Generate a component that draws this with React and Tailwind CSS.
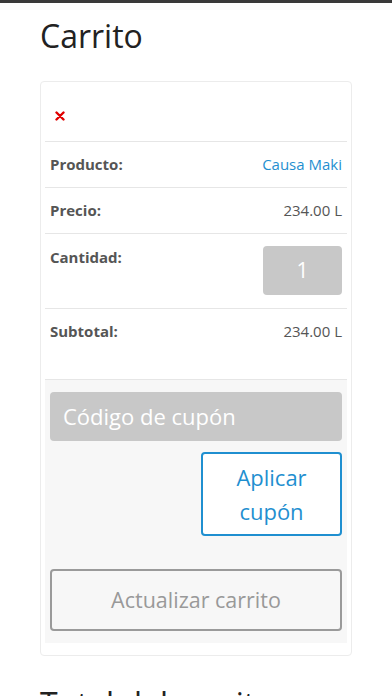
import React from "react";

const font = { fontFamily: '"Open Sans", "Liberation Sans", sans-serif' };

function Row({ label, children, className = "" }) {
  return (
    <div className={`flex justify-between border-t border-[#e6e6e6] px-[5px] ${className}`}>
      <span className="text-[15px] font-bold text-[#555]">{label}</span>
      {children}
    </div>
  );
}

export default function App() {
  return (
    <div className="min-h-[696px] bg-white overflow-hidden" style={font}>
      <div className="h-[3px] bg-[#3a3a3a]" />
      <div className="px-10">
        <h1 className="pt-[13px] text-[32px] leading-[40px] text-[#222]">Carrito</h1>

        <div className="mt-[25px] rounded border border-[#ececec] px-[4px] pt-[4px] pb-[12px]">
          <div className="h-[55px] flex items-center px-[10px]">
            <svg width="10" height="10" viewBox="0 0 10 10" className="mt-[4px]">
              <path d="M1.5 1.5 L8.5 8.5 M8.5 1.5 L1.5 8.5" stroke="#e00000" strokeWidth="2.4" strokeLinecap="round" />
            </svg>
          </div>

          <Row label="Producto:" className="h-[46px] items-center">
            <span className="text-[15px] text-[#1f8fd0]">Causa Maki</span>
          </Row>
          <Row label="Precio:" className="h-[46px] items-center">
            <span className="text-[15px] text-[#555]">234.00 L</span>
          </Row>
          <Row label="Cantidad:" className="h-[75px] items-start pt-[12px]">
            <div className="w-[79px] h-[49px] rounded bg-[#c8c8c8] flex items-center justify-center text-white text-[21px]">
              1
            </div>
          </Row>
          <Row label="Subtotal:" className="h-[71px] items-start pt-[11px]">
            <span className="text-[15px] text-[#555]">234.00 L</span>
          </Row>

          <div className="border-t border-[#e6e6e6] bg-[#f7f7f7] px-[5px] pt-[12px] pb-[12px]">
            <div className="h-[49px] rounded bg-[#c8c8c8] flex items-center px-[13px] text-[22px] text-white">
              Código de cupón
            </div>
            <div className="flex justify-end mt-[11px]">
              <button className="w-[141px] h-[84px] rounded border-2 border-[#1f8fd0] bg-white text-[#1f8fd0] text-[22px] leading-[34px]">
                Aplicar
                <br />
                cupón
              </button>
            </div>
            <button className="mt-[33px] w-full h-[62px] rounded border-2 border-[#9a9a9a] bg-[#f7f7f7] text-[#999] text-[21.5px]">
              Actualizar carrito
            </button>
          </div>
        </div>

        <h2 className="mt-[28px] text-[32px] leading-[40px] text-[#222]">Total del carrito</h2>
      </div>
    </div>
  );
}
